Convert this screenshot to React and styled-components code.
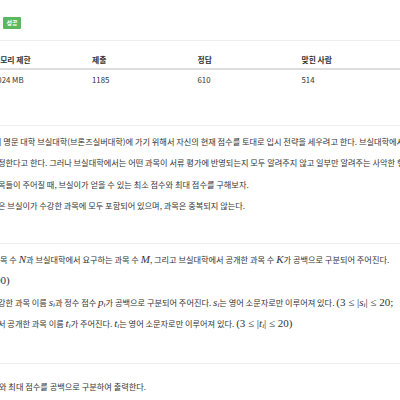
import React from 'react';
import styled, { createGlobalStyle } from 'styled-components';

const GlobalStyle = createGlobalStyle`
  html, body {
    margin: 0;
    padding: 0;
    background: #fff;
  }
  body {
    width: 400px;
    height: 400px;
    overflow: hidden;
    font-family: "Noto Sans CJK KR", "Noto Sans", sans-serif;
    color: #333;
  }
`;

const stats = [
  { label: '메모리 제한', value: '1024 MB' },
  { label: '제출', value: '1185' },
  { label: '정답', value: '610' },
  { label: '맞힌 사람', value: '514' },
];

export default function App() {
  return (
    <Page>
      <GlobalStyle />
      <TitleRow>
        <Badge>성공</Badge>
      </TitleRow>
      <Rule />
      <StatsTable>
        {stats.map((s) => (
          <HeadCell key={s.label}>{s.label}</HeadCell>
        ))}
        {stats.map((s) => (
          <DataCell key={s.label}>{s.value}</DataCell>
        ))}
      </StatsTable>

      <Section top={37} inner={5}>
        <Line lead={-6}>
          의 명문 대학 브실대학(브론즈실버대학)에 가기 위해서 자신의 현재 점수를 토대로 입시 전략을 세우려고 한다. 브실대학에서는 학생이
        </Line>
        <Line lead={-2}>
          정한다고 한다. 그러나 브실대학에서는 어떤 과목이 서류 평가에 반영되는지 모두 알려주지 않고 일부만 알려주는 사악한 행동을 한다.
        </Line>
        <Line lead={-2}>목들이 주어질 때, 브실이가 얻을 수 있는 최소 점수와 최대 점수를 구해보자.</Line>
        <Line lead={-2}>은 브실이가 수강한 과목에 모두 포함되어 있으며, 과목은 중복되지 않는다.</Line>
      </Section>

      <Section top={27} inner={5}>
        <Line lead={0}>
          목 수 <Var>N</Var>과 브실대학에서 요구하는 과목 수 <Var>M</Var>, 그리고 브실대학에서 공개한 과목 수 <Var>K</Var>가 공백으로 구분되어 주어진다.
        </Line>
        <Line lead={-5}>
          <Num>00)</Num>
        </Line>
        <Line lead={-2}>
          강한 과목 이름 <Var>s</Var><Sub>i</Sub>과 정수 점수 <Var>p</Var><Sub>i</Sub>가 공백으로 구분되어 주어진다. <Var>s</Var><Sub>i</Sub>는 영어 소문자로만 이루어져 있다. <Num>(3 ≤ |<Var>s</Var><Sub>i</Sub>| ≤ 20;</Num>
        </Line>
        <Line lead={-2}>
          서 공개한 과목 이름 <Var>t</Var><Sub>i</Sub>가 주어진다. <Var>t</Var><Sub>i</Sub>는 영어 소문자로만 이루어져 있다. <Num>(3 ≤ |<Var>t</Var><Sub>i</Sub>| ≤ 20)</Num>
        </Line>
      </Section>

      <Section top={29} inner={12}>
        <Line lead={-1}>와 최대 점수를 공백으로 구분하여 출력한다.</Line>
      </Section>
    </Page>
  );
}

const Page = styled.div`
  width: 400px;
  height: 400px;
  overflow: hidden;
`;

const TitleRow = styled.div`
  display: flex;
  align-items: center;
  padding: 17px 0 11px 3px;
`;

const Badge = styled.span`
  display: inline-flex;
  align-items: center;
  justify-content: center;
  width: 18px;
  height: 12px;
  border-radius: 1px;
  background: #5cb85c;
  color: #fff;
  font-size: 6px;
  font-weight: 700;
  line-height: 1;
`;

const Rule = styled.div`
  height: 1px;
  background: #eee;
`;

const StatsTable = styled.div`
  display: grid;
  grid-template-columns: 99px 105.5px 104px 1fr;
  margin-left: -7px;
  font-size: 7.8px;
  white-space: nowrap;
`;

const HeadCell = styled.div`
  height: 29px;
  display: flex;
  align-items: flex-end;
  padding-bottom: 3px;
  box-sizing: border-box;
  font-weight: 700;
  border-bottom: 2px solid #ddd;
`;

const DataCell = styled.div`
  height: 18px;
  display: flex;
  align-items: center;
`;

const Section = styled.section`
  margin-top: ${(p) => p.top}px;
  border-top: 1px solid #eee;
  padding-top: ${(p) => p.inner}px;
`;

const Line = styled.div`
  margin-left: ${(p) => p.lead}px;
  font-size: 8.2px;
  line-height: 21.3px;
  white-space: nowrap;
  color: #333;
`;

const Var = styled.i`
  font-family: "Liberation Serif", "DejaVu Serif", serif;
  font-size: 11px;
`;

const Num = styled.span`
  font-family: "Liberation Serif", "DejaVu Serif", serif;
  font-size: 11px;
`;

const Sub = styled.sub`
  font-family: "Liberation Serif", "DejaVu Serif", serif;
  font-style: italic;
  font-size: 7px;
  vertical-align: -1px;
  line-height: 0;
`;
